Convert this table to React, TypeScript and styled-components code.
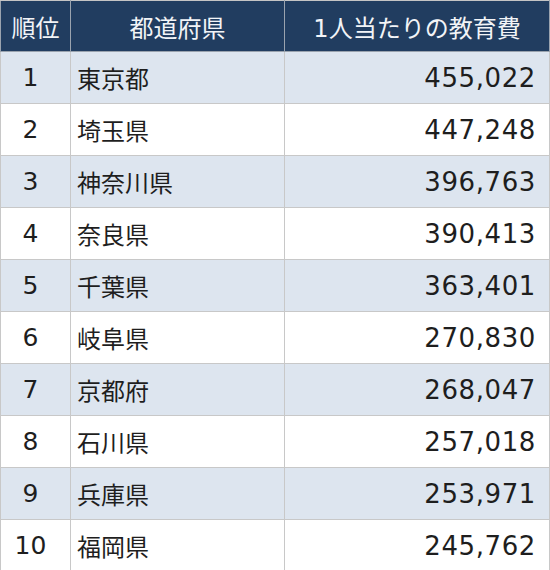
import React from "react";
import styled, {createGlobalStyle} from "styled-components";

const GlobalStyle = createGlobalStyle`
  body {
    margin: 0;
    background: #ffffff;
    font-family: "Noto Sans CJK JP", "Noto Sans", sans-serif;
  }
`;

const rows: [number, string, string][] = [
  [1, "東京都", "455,022"],
  [2, "埼玉県", "447,248"],
  [3, "神奈川県", "396,763"],
  [4, "奈良県", "390,413"],
  [5, "千葉県", "363,401"],
  [6, "岐阜県", "270,830"],
  [7, "京都府", "268,047"],
  [8, "石川県", "257,018"],
  [9, "兵庫県", "253,971"],
  [10, "福岡県", "245,762"],
];

const App = () => {
  return (
    <>
      <GlobalStyle />
      <Table>
        <colgroup>
          <col style={{width: 70}} />
          <col style={{width: 214}} />
          <col style={{width: 265}} />
        </colgroup>
        <thead>
          <tr>
            <Head>順位</Head>
            <Head>都道府県</Head>
            <Head>
              <Digits>1</Digits>人当たりの教育費
            </Head>
          </tr>
        </thead>
        <tbody>
          {rows.map(([rank, pref, cost]) => (
            <Row key={rank} $shaded={rank % 2 === 1}>
              <RankCell>{rank}</RankCell>
              <PrefCell>{pref}</PrefCell>
              <CostCell>{cost}</CostCell>
            </Row>
          ))}
        </tbody>
      </Table>
    </>
  );
};

const Table = styled.table`
  width: 549px;
  border-collapse: collapse;
  table-layout: fixed;
  border: 1px solid #c4c4c4;
  color: #1e1e1e;
`;

const Head = styled.th`
  height: 50px;
  padding: 0;
  background: #213d60;
  color: #f2f4f7;
  font-size: 24px;
  font-weight: 400;
  text-align: center;
  border: 1px solid #9aa3ae;
  border-top-color: #c4c4c4;
`;

const Digits = styled.span`
  font-family: "DejaVu Sans", "Noto Sans", sans-serif;
  font-size: 24px;
`;

const Row = styled.tr<{$shaded: boolean}>`
  height: 52px;
  background: ${(p) => (p.$shaded ? "#dde5ef" : "#ffffff")};
  td {
    border: 1px solid #c8c8c8;
    padding: 0;
    font-size: 24px;
  }
`;

const RankCell = styled.td`
  text-align: center;
  padding-right: 10px !important;
  font-family: "DejaVu Sans", "Noto Sans", sans-serif;
  font-size: 25px !important;
`;

const PrefCell = styled.td`
  padding-left: 6px !important;
  text-align: left;
`;

const CostCell = styled.td`
  padding-right: 13px !important;
  text-align: right;
  font-family: "DejaVu Sans", "Noto Sans", sans-serif;
  font-size: 26px !important;
  letter-spacing: 0.6px;
`;

export default App;
